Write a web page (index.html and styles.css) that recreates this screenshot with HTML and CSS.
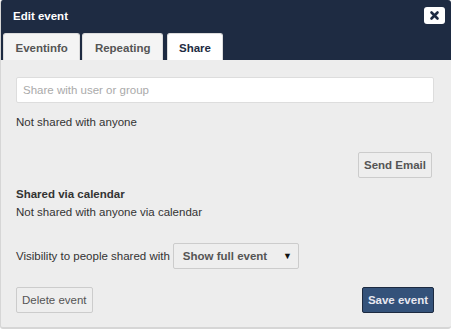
FILE: index.html
```html
<!DOCTYPE html>
<html lang="en">
<head>
    <meta charset="UTF-8">
    <meta name="viewport" content="width=device-width, initial-scale=1.0">
    <title>Edit event</title>
    <link rel="stylesheet" href="styles.css">
</head>
<body>
    <div class="dialog">
        <div class="dialog-header">
            <div class="title-row">
                <h1>Edit event</h1>
                <button class="close-button" title="Close">
                    <svg width="11" height="11" viewBox="0 0 11 11">
                        <path d="M2.5 2.5 L8.5 8.5 M8.5 2.5 L2.5 8.5" stroke="#1e2b42" stroke-width="2.6" stroke-linecap="round"/>
                    </svg>
                </button>
            </div>
            <div class="tabs">
                <div class="tab">Eventinfo</div>
                <div class="tab">Repeating</div>
                <div class="tab active">Share</div>
            </div>
        </div>

        <div class="dialog-body">
            <input type="text" class="share-input" placeholder="Share with user or group">
            <p class="share-status">Not shared with anyone</p>

            <div class="email-row">
                <button class="btn">Send Email</button>
            </div>

            <h2>Shared via calendar</h2>
            <p class="calendar-status">Not shared with anyone via calendar</p>

            <div class="visibility-row">
                <span>Visibility to people shared with</span>
                <div class="select">
                    <span>Show full event</span>
                    <span class="arrow">▼</span>
                </div>
            </div>

            <div class="footer">
                <button class="btn plain">Delete event</button>
                <button class="btn primary">Save event</button>
            </div>
        </div>
    </div>
</body>
</html>
```

FILE: styles.css
```css
* {
    margin: 0;
    padding: 0;
    box-sizing: border-box;
}

body {
    font-family: "Liberation Sans", Arial, sans-serif;
    background: #ffffff;
}

.dialog {
    width: 451px;
    height: 329px;
    background: #ededed;
    display: flex;
    flex-direction: column;
    border-left: 1px solid #d6d6d6;
    border-bottom: 2px solid #d6d6d6;
    border-radius: 3px;
    overflow: hidden;
}

.dialog-header {
    background: #1e2b42;
    padding: 0 6px 0 2px;
}

.title-row {
    display: flex;
    justify-content: space-between;
    align-items: flex-start;
    height: 33px;
    padding-left: 10px;
}

.title-row h1 {
    color: #ffffff;
    font-size: 11.5px;
    font-weight: bold;
    line-height: 16px;
    margin-top: 8px;
}

.close-button {
    width: 21px;
    height: 17px;
    margin-top: 7px;
    background: #ffffff;
    border: none;
    border-radius: 3px;
    display: flex;
    align-items: center;
    justify-content: center;
}

.tabs {
    display: flex;
    gap: 2px;
}

.tab {
    height: 27px;
    line-height: 28px;
    padding: 0 11.5px;
    background: #f4f4f4;
    border: 1px solid #dcdcdc;
    border-bottom: none;
    border-radius: 3px 3px 0 0;
    font-size: 11.5px;
    font-weight: bold;
    color: #555555;
}

.tab.active {
    background: #ffffff;
    color: #1e2b42;
    margin-left: 2px;
    padding: 0 11px;
}

.dialog-body {
    flex: 1;
    padding: 17px 17px 0 15px;
    display: flex;
    flex-direction: column;
    font-size: 11.5px;
    color: #333333;
}

.share-input {
    width: 100%;
    height: 26px;
    border: 1px solid #dddddd;
    border-radius: 2px;
    padding: 0 6px;
    font-family: inherit;
    font-size: 11.5px;
    outline: none;
}

.share-input::placeholder {
    color: #aaaaaa;
}

.share-status {
    margin-top: 11px;
    line-height: 16px;
}

.email-row {
    display: flex;
    justify-content: flex-end;
    margin-top: 22px;
    padding-right: 2px;
}

.btn {
    height: 26px;
    padding: 0 5px;
    border: 1px solid #cccccc;
    border-radius: 2px;
    background: #eeeeee;
    font-family: inherit;
    font-size: 11.5px;
    font-weight: bold;
    color: #555555;
}

.btn.plain {
    font-weight: normal;
}

.btn.primary {
    background: #34527a;
    border-color: #1c2a40;
    color: #e8e8f0;
}

h2 {
    font-size: 11.5px;
    font-weight: bold;
    line-height: 18px;
    margin-top: 7px;
}

.calendar-status {
    line-height: 18px;
}

.visibility-row {
    display: flex;
    align-items: center;
    gap: 3px;
    margin-top: 22px;
}

.select {
    width: 126px;
    height: 26px;
    border: 1px solid #cccccc;
    border-radius: 2px;
    background: #eeeeee;
    display: flex;
    align-items: center;
    justify-content: space-between;
    padding: 0 6px 0 9px;
    font-size: 11.5px;
    font-weight: bold;
    color: #555555;
}

.select .arrow {
    font-size: 9px;
    color: #111111;
}

.footer {
    display: flex;
    justify-content: space-between;
    margin-top: 18px;
}
```
